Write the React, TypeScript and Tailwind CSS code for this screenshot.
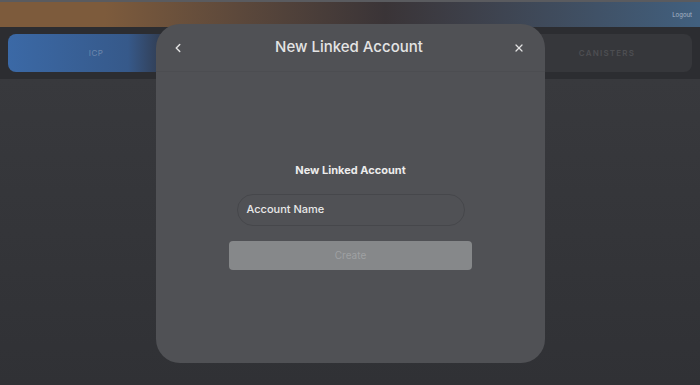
import React from 'react';
import { ChevronLeft, X } from 'lucide-react';

const App: React.FC = () => {
  return (
    <div
      className="relative w-[700px] h-[385px] overflow-hidden bg-[#323337] text-white"
      style={{ fontFamily: 'Inter, "Noto Sans", sans-serif' }}
    >
      {/* top bar */}
      <div className="h-[27px] border-t-2 border-[#5a5b5f] bg-gradient-to-r from-[#7d5b3c] from-15% via-[#3a3437] via-55% to-[#41607f] flex items-center justify-end pr-[8px]">
        <span className="text-[6px] text-[#a9b8c9]">Logout</span>
      </div>

      {/* tabs */}
      <div className="bg-[#2c2d31] h-[52px] px-[8px] pt-[7px] flex justify-between">
        <div className="w-[300px] h-[38px] rounded-[8px] bg-gradient-to-r from-[#3b69a6] via-[#36598a] via-40% to-[#2e3340] to-55% flex items-center justify-center">
          <span className="text-[8px] tracking-wider text-[#6e88ad] pr-[124px]">ICP</span>
        </div>
        <div className="w-[300px] h-[38px] rounded-[8px] bg-[#36373b] flex items-center justify-center">
          <span className="text-[8px] tracking-[0.15em] font-semibold text-[#4d4e52] pl-[130px]">CANISTERS</span>
        </div>
      </div>

      {/* content */}
      <div className="h-[306px] bg-gradient-to-b from-[#38393d] to-[#303135]" />

      {/* modal */}
      <div className="absolute left-[156px] top-[24px] w-[389px] h-[339px] rounded-[24px] bg-[#505155] flex flex-col">
        <div className="h-[48px] border-b border-[#4c4d51] flex items-center justify-between pl-[15px] pr-[20px]">
          <ChevronLeft className="w-[14px] h-[14px] text-[#e2e2e2]" strokeWidth={2.5} />
          <span className="text-[15px] text-[#e4e4e4] font-medium">New Linked Account</span>
          <X className="w-[12px] h-[12px] text-[#e2e2e2]" strokeWidth={2.5} />
        </div>
        <div className="flex flex-col items-center pt-[90px]">
          <span className="text-[11px] font-bold text-[#ececec]">New Linked Account</span>
          <div className="mt-[15px] w-[228px] h-[32px] rounded-full border border-[#46474b] flex items-center px-[9px]">
            <span className="text-[11px] text-[#e8e8e8] font-medium">Account Name</span>
          </div>
          <div className="mt-[15px] w-[243px] h-[29px] rounded-[4px] bg-[#86888a] flex items-center justify-center">
            <span className="text-[10px] text-[#9fa1a3]">Create</span>
          </div>
        </div>
      </div>
    </div>
  );
};

export default App;
